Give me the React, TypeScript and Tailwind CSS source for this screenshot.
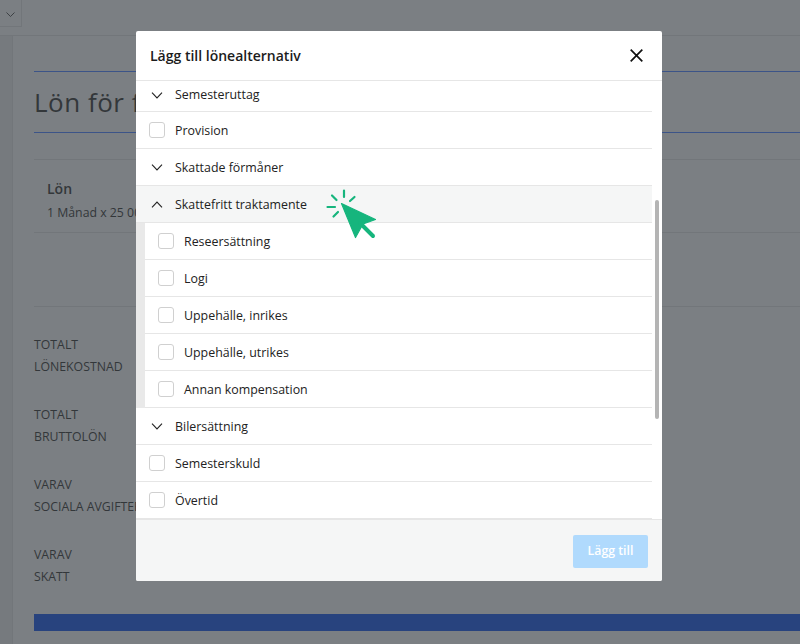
const font = { fontFamily: '"Open Sans", sans-serif' };

type Row = { label: string; kind: 'closed' | 'open' | 'check' | 'nested' };

const ROWS: Row[] = [
  { label: 'Provision', kind: 'check' },
  { label: 'Skattade förmåner', kind: 'closed' },
  { label: 'Skattefritt traktamente', kind: 'open' },
  { label: 'Reseersättning', kind: 'nested' },
  { label: 'Logi', kind: 'nested' },
  { label: 'Uppehälle, inrikes', kind: 'nested' },
  { label: 'Uppehälle, utrikes', kind: 'nested' },
  { label: 'Annan kompensation', kind: 'nested' },
  { label: 'Bilersättning', kind: 'closed' },
  { label: 'Semesterskuld', kind: 'check' },
  { label: 'Övertid', kind: 'check' },
];

const SUMMARY = [
  ['TOTALT', 'LÖNEKOSTNAD'],
  ['TOTALT', 'BRUTTOLÖN'],
  ['VARAV', 'SOCIALA AVGIFTER'],
  ['VARAV', 'SKATT'],
];

function Chevron({ up = false }: { up?: boolean }) {
  return (
    <svg width="12" height="7" viewBox="0 0 12 7" fill="none" stroke="#222" strokeWidth="1.1" className="shrink-0 mt-px">
      <path d={up ? 'M1 6.3 6 1l5 5.3' : 'M1 .7 6 6l5-5.3'} />
    </svg>
  );
}

function Checkbox() {
  return <span className="w-4 h-4 shrink-0 rounded-[3px] border-[1.5px] border-[#d0d0d0] bg-white" />;
}

function ListRow({ row }: { row: Row }) {
  if (row.kind === 'nested') {
    return (
      <div className="flex pl-[9px] bg-[#e9e9e9] mr-[10px]">
        <div className="flex-1 h-[37px] flex items-center gap-[10px] pl-[13px] bg-white border-b border-[#e6e6e6] text-[12.4px] text-[#222]">
          <Checkbox />
          <span className="pt-[2px]">{row.label}</span>
        </div>
      </div>
    );
  }
  const isCheck = row.kind === 'check';
  return (
    <div
      className={`h-[37px] mr-[10px] flex items-center border-b border-[#e6e6e6] text-[12.4px] text-[#222] ${
        isCheck ? 'pl-[13px] gap-[10px]' : 'pl-[15px] gap-3'
      } ${row.kind === 'open' ? 'bg-[#f5f6f6]' : 'bg-white'}`}
    >
      {isCheck ? <Checkbox /> : <Chevron up={row.kind === 'open'} />}
      <span className="pt-[2px]">{row.label}</span>
    </div>
  );
}

function ClickCursor() {
  return (
    <svg
      width="66"
      height="66"
      viewBox="0 0 66 66"
      className="absolute left-[184px] top-[149px]"
      fill="none"
      stroke="#16b57d"
      strokeLinecap="round"
      strokeLinejoin="round"
    >
      <path strokeWidth="2.2" d="M24 10.500v6.500M34.500 17 30 21M12 15.500l4.500 4.500M7.500 27H15M18 32l-4.500 4.500" />
      <path fill="#16b57d" strokeWidth="1.200" d="M21.500 23.500 55.500 39.500 43 44 35.500 57.500z" />
      <path strokeWidth="4" d="M40 43l13 13" />
    </svg>
  );
}

export default function App() {
  return (
    <div className="relative w-[800px] h-[644px] overflow-hidden bg-[#7b7f83]" style={font}>
      {/* page behind the dialog */}
      <div className="h-9 border-b border-[#72767a] flex">
        <div className="w-[22px] h-[27px] border-r border-b border-[#72767a] flex items-center justify-center pt-0.5">
          <svg width="9" height="5" viewBox="0 0 9 5" fill="none" stroke="#3d4144" strokeWidth="1">
            <path d="M.5.500 4.500 4.500 8.500.500" />
          </svg>
        </div>
      </div>
      <div className="flex h-[608px]">
        <div className="w-[13px] shrink-0 bg-[#767a7e] border-r border-[#72767a]" />
        <div className="flex-1 pl-[21px] pt-[35px]">
          <div className="border-t border-b border-[#3c5488] h-[62px] flex items-center">
            <span className="text-[26px] tracking-[0.5px] text-[#33373a]">Lön för f</span>
          </div>
          <div className="mt-[26px] border-t border-b border-[#72767a] h-[74px] pl-[13px] pt-[19px]">
            <div className="text-sm leading-5 font-semibold text-[#33373a]">Lön</div>
            <div className="text-[12.3px] leading-[27px] text-[#33373a]">1 Månad x 25 00</div>
          </div>
          <div className="mt-[73px] border-t border-[#72767a] pt-[27px] flex flex-col gap-[26px]">
            {SUMMARY.map((lines) => (
              <div key={lines[1]} className="text-[12.3px] leading-[22px] text-[#33373a]">
                <div>{lines[0]}</div>
                <div>{lines[1]}</div>
              </div>
            ))}
          </div>
          <div className="mt-[26px] h-[17px] bg-[#28437e]" />
        </div>
      </div>

      {/* dialog */}
      <div className="absolute left-[136px] top-[31px] w-[526px] h-[550px] flex flex-col bg-white rounded-[2px] overflow-hidden">
        <div className="h-[50px] shrink-0 flex items-center justify-between pl-[14px] pr-[19px] border-b border-[#e6e6e6]">
          <span className="text-sm font-semibold text-[#1c1c1c]">Lägg till lönealternativ</span>
          <svg width="13" height="13" viewBox="0 0 13 13" fill="none" stroke="#111" strokeWidth="1.700">
            <path d="M.7.700l11.600 11.600M12.300.700.700 12.300" />
          </svg>
        </div>
        <div className="relative h-[438px] shrink-0 overflow-hidden">
          <div className="h-[31px] mr-[10px] flex items-center gap-3 pl-[15px] pb-[2px] border-b border-[#e6e6e6] text-[12.4px] text-[#222]">
            <Chevron />
            Semesteruttag
          </div>
          {ROWS.map((row) => (
            <ListRow key={row.label} row={row} />
          ))}
          <div className="absolute right-[3px] top-[119px] w-1 h-[219px] rounded-full bg-[#b4b4b4]" />
        </div>
        <div className="flex-1 flex items-start justify-end pt-[15px] pr-[14px] bg-[#f5f6f6] border-t border-[#e6e6e6]">
          <div className="w-[75px] h-[33px] flex items-center justify-center rounded-[2px] bg-[#b0dafd] text-[12.3px] font-semibold text-white">
            Lägg till
          </div>
        </div>
        <ClickCursor />
      </div>
    </div>
  );
}
